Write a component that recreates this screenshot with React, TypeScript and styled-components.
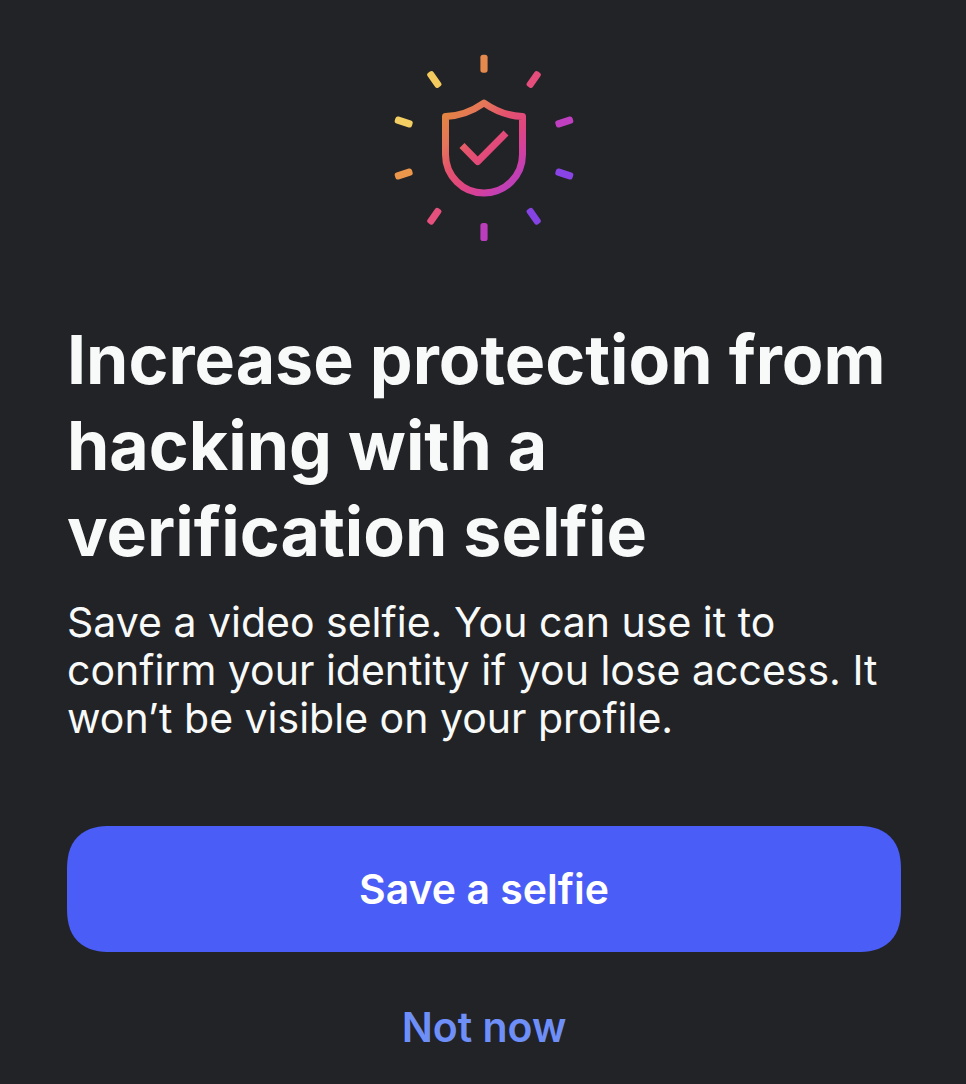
import React from "react";
import styled, { createGlobalStyle } from "styled-components";

const GlobalStyle = createGlobalStyle`
  * { box-sizing: border-box; }
  body {
    margin: 0;
    background: #222327;
    color: #f8faf9;
    font-family: Inter, "Liberation Sans", sans-serif;
  }
`;

const Screen = styled.main`
  display: flex;
  flex-direction: column;
  min-height: 100vh;
  padding: 48px 65px 0 67px;
`;

const Emblem = styled.svg`
  align-self: center;
  width: 200px;
  height: 200px;
`;

const Title = styled.h1`
  margin: 68px 0 0;
  font-size: 68px;
  line-height: 86px;
  font-weight: 700;
`;

const Description = styled.p`
  margin: 24px 0 0;
  font-size: 41px;
  line-height: 48px;
`;

const Actions = styled.div`
  display: flex;
  flex-direction: column;
  gap: 12px;
  margin-top: 84px;
`;

const Button = styled.button<{ $primary?: boolean }>`
  height: 126px;
  border: 0;
  border-radius: 44px;
  corner-shape: superellipse(1.3);
  background: ${(p) => (p.$primary ? "#4a5df6" : "transparent")};
  color: ${(p) => (p.$primary ? "#ffffff" : "#6f8ff8")};
  font: inherit;
  font-size: 41px;
  font-weight: 600;
  cursor: pointer;
`;

const RAYS = [
  { x: 100, y: 15.7, angle: 0, color: "#e58a4c" },
  { x: 149.7, y: 31.5, angle: 35, color: "#e54e7c" },
  { x: 180.3, y: 74, angle: 72, color: "#c03fc0" },
  { x: 180.3, y: 126, angle: 108, color: "#8a43e6" },
  { x: 149.7, y: 168.3, angle: 145, color: "#8443e2" },
  { x: 100, y: 184, angle: 0, color: "#ba3dbb" },
  { x: 50.3, y: 168.3, angle: 35, color: "#e5507c" },
  { x: 19.7, y: 126, angle: 72, color: "#ec964c" },
  { x: 19.7, y: 74, angle: 108, color: "#f3ce62" },
  { x: 50.3, y: 31.5, angle: 145, color: "#f3ca5e" },
];

function ShieldEmblem() {
  return (
    <Emblem viewBox="0 0 200 200" fill="none" aria-hidden="true">
      <defs>
        <linearGradient id="shield" gradientUnits="userSpaceOnUse" x1="62" y1="62" x2="130" y2="130">
          <stop offset="0" stopColor="#e3863f" />
          <stop offset="0.25" stopColor="#e4755a" />
          <stop offset="0.45" stopColor="#e5546c" />
          <stop offset="0.68" stopColor="#e0467f" />
          <stop offset="0.88" stopColor="#d13fa2" />
          <stop offset="1" stopColor="#c03fb6" />
        </linearGradient>
      </defs>
      {RAYS.map((ray) => (
        <rect
          key={`${ray.x}-${ray.y}`}
          x={ray.x - 3.6}
          y={ray.y - 9}
          width="7.2"
          height="18"
          rx="2.6"
          fill={ray.color}
          transform={`rotate(${ray.angle} ${ray.x} ${ray.y})`}
        />
      ))}
      <g stroke="url(#shield)" strokeWidth="7" strokeLinejoin="round">
        <path d="M100 55C90 62 76 68 61.5 68.5V106.5A38.5 38.5 0 0 0 138.5 106.5V68.5C124 68 110 62 100 55Z" />
        <path d="M78 97.5L93.7 113.5L122 85" />
      </g>
    </Emblem>
  );
}

export default function App() {
  return (
    <>
      <GlobalStyle />
      <Screen>
        <ShieldEmblem />
        <Title>Increase protection from hacking with a verification selfie</Title>
        <Description>
          Save a video selfie. You can use it to confirm your identity if you lose access. It won’t be visible on your profile.
        </Description>
        <Actions>
          <Button type="button" $primary>Save a selfie</Button>
          <Button type="button">Not now</Button>
        </Actions>
      </Screen>
    </>
  );
}
